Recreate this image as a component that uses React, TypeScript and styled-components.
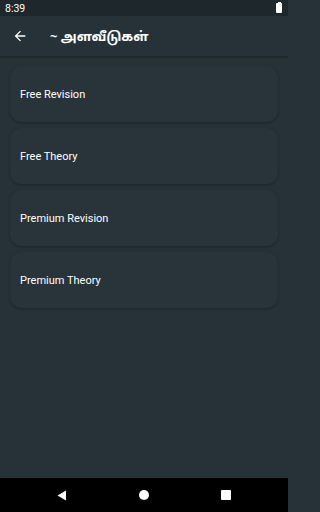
import React from "react";
import styled, { createGlobalStyle } from "styled-components";

const Global = createGlobalStyle`
  html, body { margin: 0; padding: 0; background: #263238; }
  body { font-family: Roboto, "Noto Sans", sans-serif; }
  * { box-sizing: border-box; }
`;

const Screen = styled.div`
  width: 288px;
  height: 512px;
  display: flex;
  flex-direction: column;
  background: #263238;
  overflow: hidden;
`;

const StatusBar = styled.div`
  height: 16px;
  flex: none;
  background: #1e272c;
  display: flex;
  align-items: center;
  justify-content: space-between;
  padding: 0 6px 0 5px;
  color: #ffffff;
  font-size: 10.5px;
  font-family: Roboto, sans-serif;
`;

const Battery = styled.div`
  width: 6px;
  height: 10px;
  background: #fff;
  border-radius: 1px;
  position: relative;
  &::before {
    content: "";
    position: absolute;
    top: -1px;
    left: 1.5px;
    width: 3px;
    height: 1px;
    background: #fff;
  }
`;

const AppBar = styled.div`
  height: 40px;
  flex: none;
  background: #263238;
  display: flex;
  align-items: center;
  padding-left: 12px;
  gap: 22px;
  box-shadow: 0 1px 2px rgba(0, 0, 0, 0.35);
  position: relative;
  z-index: 1;
`;

const Title = styled.div`
  color: #ffffff;
  font-family: "Noto Sans", "Noto Sans Tamil", Roboto, sans-serif;
  font-weight: 700;
  font-size: 13px;
`;

const List = styled.div`
  flex: 1;
  display: flex;
  flex-direction: column;
  gap: 6px;
  padding: 10px 10px 0 10px;
`;

const Card = styled.div`
  height: 56px;
  border-radius: 12px;
  background: #29333a;
  box-shadow: 0 1px 3px rgba(0, 0, 0, 0.3);
  display: flex;
  align-items: center;
  padding-left: 10px;
  color: #ffffff;
  font-size: 11px;
  font-family: Roboto, sans-serif;
`;

const NavBar = styled.div`
  height: 34px;
  flex: none;
  background: #000;
  display: flex;
  align-items: center;
  justify-content: center;
  gap: 72px;
`;

const Dot = styled.div`
  width: 10px;
  height: 10px;
  border-radius: 50%;
  background: #fff;
`;

const Square = styled.div`
  width: 10px;
  height: 10px;
  border-radius: 1px;
  background: #fff;
`;

const items = ["Free Revision", "Free Theory", "Premium Revision", "Premium Theory"];

export default function App() {
  return (
    <Screen>
      <Global />
      <StatusBar>
        <span>8:39</span>
        <Battery />
      </StatusBar>
      <AppBar>
        <svg width="16" height="16" viewBox="0 0 24 24">
          <path d="M20 11H7.83l5.59-5.59L12 4l-8 8 8 8 1.41-1.41L7.83 13H20v-2z" fill="#fff" />
        </svg>
        <Title>~ அளவீடுகள்</Title>
      </AppBar>
      <List>
        {items.map((t) => (
          <Card key={t}>{t}</Card>
        ))}
      </List>
      <NavBar>
        <svg width="10" height="11" viewBox="0 0 10 11">
          <path d="M9 0.5 L0.5 5.5 L9 10.5 Z" fill="#fff" />
        </svg>
        <Dot />
        <Square />
      </NavBar>
    </Screen>
  );
}
